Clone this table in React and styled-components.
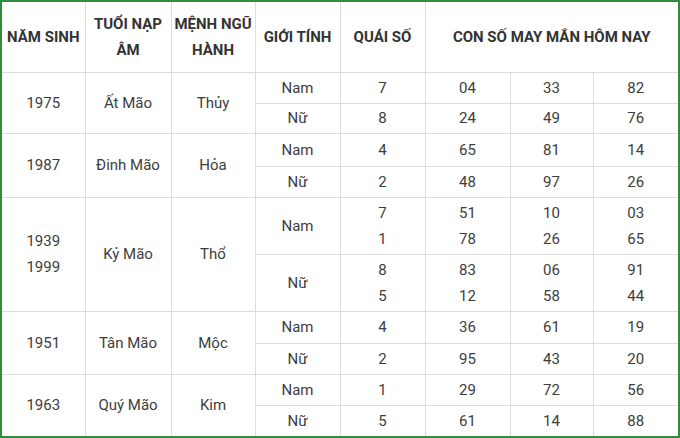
import React from 'react'
import styled, { createGlobalStyle } from 'styled-components'

const GlobalStyle = createGlobalStyle`
  html, body {
    margin: 0;
    padding: 0;
    background: #fff;
  }
  body {
    font-family: Roboto, "Liberation Sans", sans-serif;
  }
`

const widths = [83, 86, 84, 85, 85, 85, 83, 85]

const groups = [
  {
    years: ['1975'], napAm: 'Ất Mão', menh: 'Thủy',
    rows: [
      { sex: 'Nam', quai: ['7'], nums: [['04'], ['33'], ['82']], h: 31 },
      { sex: 'Nữ', quai: ['8'], nums: [['24'], ['49'], ['76']], h: 30 },
    ],
  },
  {
    years: ['1987'], napAm: 'Đinh Mão', menh: 'Hỏa',
    rows: [
      { sex: 'Nam', quai: ['4'], nums: [['65'], ['81'], ['14']], h: 33 },
      { sex: 'Nữ', quai: ['2'], nums: [['48'], ['97'], ['26']], h: 31 },
    ],
  },
  {
    years: ['1939', '1999'], napAm: 'Kỷ Mão', menh: 'Thổ',
    rows: [
      { sex: 'Nam', quai: ['7', '1'], nums: [['51', '78'], ['10', '26'], ['03', '65']], h: 57 },
      { sex: 'Nữ', quai: ['8', '5'], nums: [['83', '12'], ['06', '58'], ['91', '44']], h: 57 },
    ],
  },
  {
    years: ['1951'], napAm: 'Tân Mão', menh: 'Mộc',
    rows: [
      { sex: 'Nam', quai: ['4'], nums: [['36'], ['61'], ['19']], h: 32 },
      { sex: 'Nữ', quai: ['2'], nums: [['95'], ['43'], ['20']], h: 31 },
    ],
  },
  {
    years: ['1963'], napAm: 'Quý Mão', menh: 'Kim',
    rows: [
      { sex: 'Nam', quai: ['1'], nums: [['29'], ['72'], ['56']], h: 31 },
      { sex: 'Nữ', quai: ['5'], nums: [['61'], ['14'], ['88']], h: 31 },
    ],
  },
]

const Frame = styled.div`
  width: 680px;
  height: 438px;
  box-sizing: border-box;
  border: 2px solid #2f8e3b;
  overflow: hidden;
`

const Table = styled.table`
  width: 676px;
  table-layout: fixed;
  border-collapse: collapse;
  color: #3d3d3d;
  font-size: 15px;
`

const HeadRow = styled.tr`
  height: 70px;
`

const Th = styled.th`
  padding: 0 2px;
  font-weight: 700;
  color: #333;
  line-height: 26px;
  text-align: center;
  vertical-align: middle;
  border: 1px solid #dcdcdc;
  border-top: none;
  &:first-child { border-left: none; }
  &:last-child { border-right: none; }
`

const Row = styled.tr`
  height: ${({ $h }) => $h}px;
`

const Td = styled.td`
  padding: 0;
  text-align: center;
  vertical-align: middle;
  line-height: 26px;
  border: 1px solid #dcdcdc;
  border-top-color: ${({ $group }) => ($group ? '#d6d6d6' : '#e2e2e2')};
  &:first-child { border-left: none; }
  &:last-child { border-right: none; }
`

const Lines = ({ items }) => (
  <>
    {items.map((t, i) => (
      <div key={i}>{t}</div>
    ))}
  </>
)

export default function App() {
  return (
    <>
      <GlobalStyle />
      <Frame>
        <Table>
          <colgroup>
            {widths.map((w, i) => (
              <col key={i} style={{ width: w }} />
            ))}
          </colgroup>
          <thead>
            <HeadRow>
              <Th>NĂM SINH</Th>
              <Th>TUỔI NẠP ÂM</Th>
              <Th>MỆNH NGŨ HÀNH</Th>
              <Th>GIỚI TÍNH</Th>
              <Th>QUÁI SỐ</Th>
              <Th colSpan={3}>CON SỐ MAY MẮN HÔM NAY</Th>
            </HeadRow>
          </thead>
          <tbody>
            {groups.map((g, gi) =>
              g.rows.map((r, ri) => (
                <Row key={`${gi}-${ri}`} $h={r.h}>
                  {ri === 0 && (
                    <>
                      <Td rowSpan={2} $group><Lines items={g.years} /></Td>
                      <Td rowSpan={2} $group>{g.napAm}</Td>
                      <Td rowSpan={2} $group>{g.menh}</Td>
                    </>
                  )}
                  <Td $group={ri === 0}>{r.sex}</Td>
                  <Td $group={ri === 0}><Lines items={r.quai} /></Td>
                  {r.nums.map((n, ni) => (
                    <Td key={ni} $group={ri === 0}><Lines items={n} /></Td>
                  ))}
                </Row>
              ))
            )}
          </tbody>
        </Table>
      </Frame>
    </>
  )
}
